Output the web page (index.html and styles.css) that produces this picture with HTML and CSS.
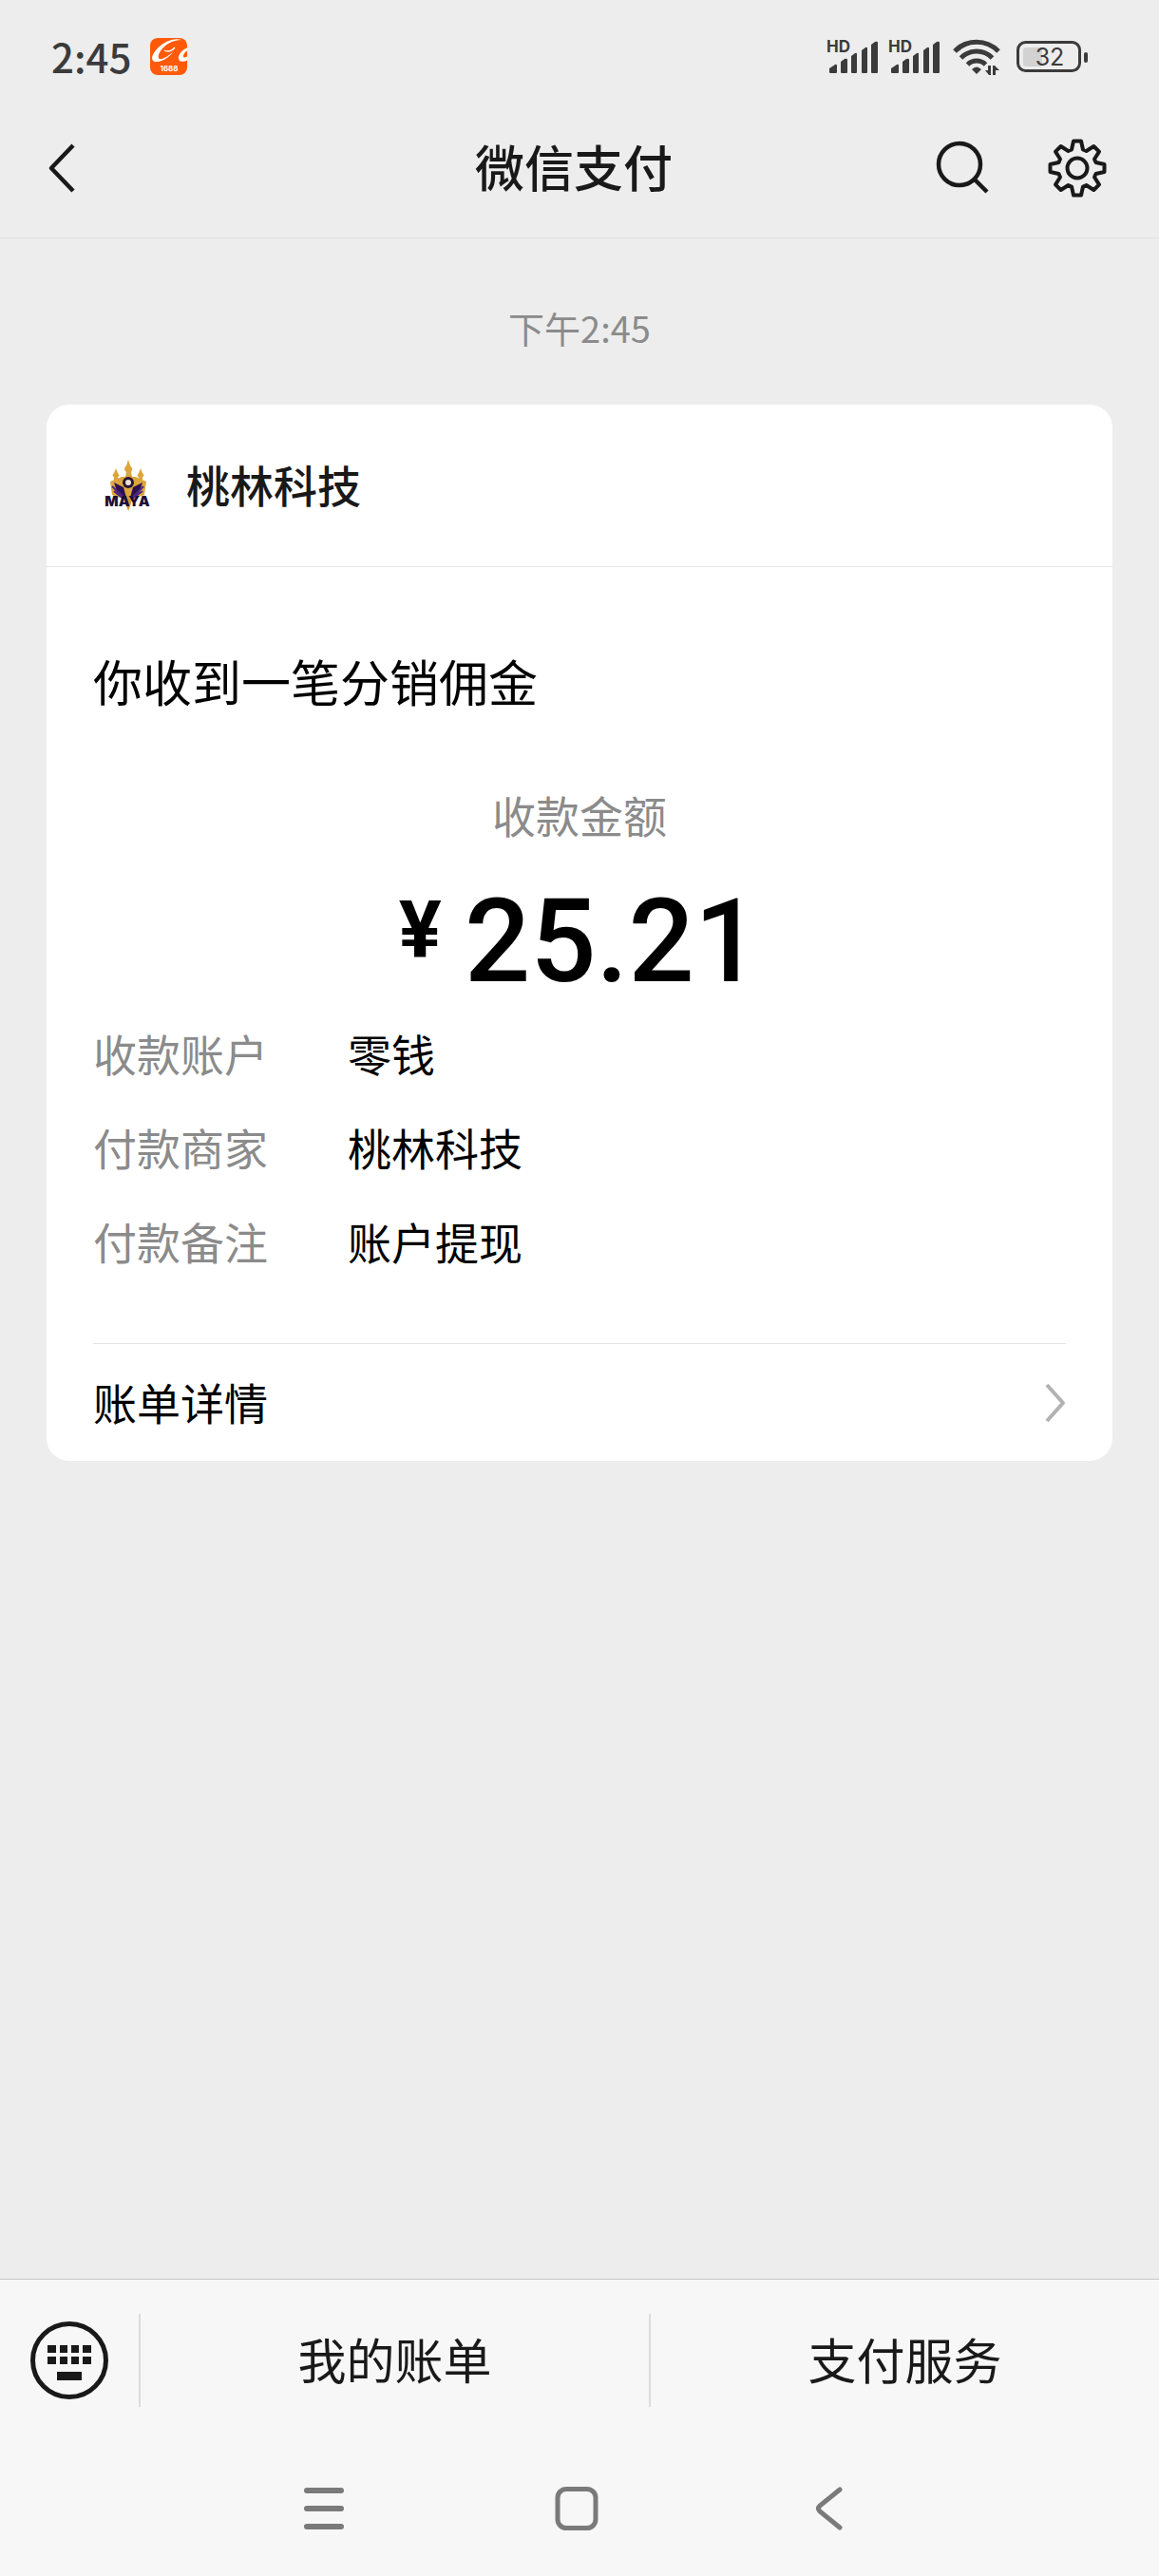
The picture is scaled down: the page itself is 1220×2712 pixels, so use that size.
FILE: index.html
```html
<!DOCTYPE html>
<html lang="zh-CN">
<head>
  <meta charset="UTF-8" />
  <meta name="viewport" content="width=device-width, initial-scale=1.0" />
  <title>微信支付</title>
  <link rel="stylesheet" href="styles.css">
</head>
<body>
  <div class="status">
    <span class="clock">2:45</span>
    <svg class="app-icon" width="40" height="40" viewBox="0 0 40 40">
      <defs><clipPath id="appClip"><rect width="39" height="39" rx="8" /></clipPath></defs>
      <g clip-path="url(#appClip)">
        <rect width="40" height="40" fill="#ff5a0a" />
        <path d="M33 2C24-1 12 5 6 13c-6 7-5 13 2 12 7-1 13-6 17-11-5 4-11 9-15 8-4-2 2-12 9-16 5-3 10-4 14-4z" fill="#fff" />
        <path d="M15 13c3 2 8 1 11-3" fill="none" stroke="#fff" stroke-width="1.5" />
        <path d="M40 10c-6 2-11 8-10 12 1 4 6 3 10 1v-4c-3 2-5 2-5 0 0-3 3-5 5-6z" fill="#fff" />
        <text x="20" y="35" class="app-text">1688</text>
      </g>
    </svg>
    <div class="status-right">
      <svg width="55" height="40" viewBox="0 0 55 40">
        <text x="0" y="15" class="hd-text">HD</text>
        <path d="M3 36v-4l6-4q2-1 2 1v7q0 1-1 1H4q-1 0-1-1zM15 36V25l4-3q3-1 3 1v13q0 1-1 1h-5q-1 0-1-1zM26 36V19l4-3q2-1 2 1v19q0 1-1 1h-4q-1 0-1-1zM37 36V13l4-3q2-1 2 1v25q0 1-1 1h-4q-1 0-1-1zM47 36V7l4-3q3-1 3 1v31q0 1-1 1h-5q-1 0-1-1z" fill="#3b3b3b" />
      </svg>
      <svg width="55" height="40" viewBox="0 0 55 40">
        <text x="0" y="15" class="hd-text">HD</text>
        <path d="M3 36v-4l6-4q2-1 2 1v7q0 1-1 1H4q-1 0-1-1zM15 36V25l4-3q3-1 3 1v13q0 1-1 1h-5q-1 0-1-1zM26 36V19l4-3q2-1 2 1v19q0 1-1 1h-4q-1 0-1-1zM37 36V13l4-3q2-1 2 1v25q0 1-1 1h-4q-1 0-1-1zM47 36V7l4-3q3-1 3 1v31q0 1-1 1h-5q-1 0-1-1z" fill="#3b3b3b" />
      </svg>
      <svg class="wifi" width="50" height="40" viewBox="0 0 50 40">
        <g fill="none" stroke="#3b3b3b" stroke-width="5">
          <path d="M2 14a32 32 0 0 1 46 0" />
          <path d="M8.500 21a23 23 0 0 1 33 0" />
          <path d="M15.500 28a13.500 13.500 0 0 1 19 0" />
        </g>
        <path d="M25 38l-5-5q5-5 10 0z" fill="#3b3b3b" />
        <path d="M40 29v10h-2l-4-5h3v-5zM42 39V29h2l5 5h-4v5z" fill="#3b3b3b" />
      </svg>
      <svg class="battery" width="76" height="34" viewBox="0 0 76 34">
        <rect x="7" y="7" width="20" height="20" rx="3" fill="#d2d2d2" />
        <rect x="1.500" y="1.500" width="65" height="30" rx="8" fill="none" stroke="#3b3b3b" stroke-width="3" />
        <rect x="71" y="12" width="4" height="11" rx="2" fill="#3b3b3b" />
        <text x="35" y="26" class="battery-text">32</text>
      </svg>
    </div>
  </div>

  <header class="header">
    <button class="icon-btn back" aria-label="返回">
      <svg width="30" height="54" viewBox="0 0 30 54"><path d="M27 3L4 27l23 24" fill="none" stroke="#191919" stroke-width="4.500" stroke-linejoin="round" /></svg>
    </button>
    <h1>微信支付</h1>
    <div class="header-right">
      <button class="icon-btn" aria-label="搜索">
        <svg width="58" height="58" viewBox="0 0 58 58" fill="none" stroke="#191919" stroke-width="4.500"><circle cx="25" cy="25" r="22" /><path d="M41 41l13 13" /></svg>
      </button>
      <button class="icon-btn" aria-label="设置">
        <svg width="62" height="62" viewBox="-31 -31 62 62" fill="none" stroke="#191919" stroke-width="4" stroke-linejoin="round">
          <path d="M-4-28.500H4L6-19.500 9.500-18 17.300-23 23-17.300 18-9.500 19.500-6 28.500-4V4L19.500 6 18 9.500 23 17.300 17.300 23 9.500 18 6 19.500 4 28.500H-4L-6 19.500-9.500 18-17.300 23-23 17.300-18 9.500-19.500 6-28.500 4V-4L-19.500-6-18-9.500-23-17.300-17.300-23-9.500-18-6-19.500z" />
          <circle r="10.500" />
        </svg>
      </button>
    </div>
  </header>

  <main>
    <p class="time">下午2:45</p>

    <section class="card">
      <div class="card-head">
        <svg width="72" height="72" viewBox="0 0 72 72">
          <g fill="#dca63c">
            <path d="M37 9l2 6q4 4 1 7l2 9h-9l2-9q-4-3 0-7zM24 18l2 5q3 3 0 4v5h-4v-5q-3-1 0-4zM50 18l2 5q3 3 0 4v5h-4v-5q-3-1 0-4z" />
            <path d="M18 32l12-5h15l11 5-2 14-11 4-6 8-6-8-11-4z" />
          </g>
          <path d="M22 33l10 5 3 11-9-4zM52 33l-10 5-3 11 9-4z" fill="#2b1150" />
          <path d="M20 37l13 12M53 37L41 49M22 42l10 8M52 42l-11 8" stroke="#4d2584" stroke-width="2" />
          <circle cx="37" cy="33" r="6" fill="#28172f" />
          <circle cx="37" cy="33" r="3" fill="#e9e2d4" />
          <path d="M37 47l3 8-3 8-3-8z" fill="#d39a32" />
          <text x="36" y="58" class="logo-text">MAYA</text>
        </svg>
        <h2>桃林科技</h2>
      </div>
      <div class="card-body">
        <h3>你收到一笔分销佣金</h3>
        <p class="amount-label">收款金额</p>
        <p class="amount"><span class="yen">¥</span>25.21</p>
        <dl class="details">
          <dt>收款账户</dt><dd>零钱</dd>
          <dt>付款商家</dt><dd>桃林科技</dd>
          <dt>付款备注</dt><dd>账户提现</dd>
        </dl>
        <a href="#" class="bill-link">
          <span>账单详情</span>
          <svg width="22" height="42" viewBox="0 0 22 42"><path d="M2 2l17 19L2 40" fill="none" stroke="#b2b2b2" stroke-width="4" stroke-linejoin="round" /></svg>
        </a>
      </div>
    </section>
  </main>

  <footer>
    <div class="menu-bar">
      <button class="keyboard" aria-label="键盘">
        <svg width="82" height="82" viewBox="0 0 82 82">
          <circle cx="41" cy="41" r="38.500" fill="none" stroke="#191919" stroke-width="5" />
          <path d="M18 25h9v8h-9zM31 25h8v8h-8zM43 25h8v8h-8zM55 25h9v8h-9zM18 37h9v8h-9zM31 37h8v8h-8zM43 37h8v8h-8zM55 37h9v8h-9zM28 53h26v9H28z" fill="#191919" />
        </svg>
      </button>
      <button class="menu-item">我的账单</button>
      <button class="menu-item">支付服务</button>
    </div>
    <nav class="system-nav">
      <button class="icon-btn" aria-label="最近任务">
        <svg width="46" height="46" viewBox="0 0 46 46"><path d="M5 4h36M5 23h36M5 42h36" stroke="#7a7a7a" stroke-width="6" stroke-linecap="round" /></svg>
      </button>
      <button class="icon-btn" aria-label="主屏幕">
        <svg width="46" height="46" viewBox="0 0 46 46"><rect x="3" y="2.500" width="40" height="41" rx="9" fill="none" stroke="#7a7a7a" stroke-width="5" /></svg>
      </button>
      <button class="icon-btn" aria-label="后退">
        <svg width="46" height="46" viewBox="0 0 46 46"><path d="M34 3L13 20q-3 3 0 6l21 17" fill="none" stroke="#7a7a7a" stroke-width="5" stroke-linecap="round" /></svg>
      </button>
    </nav>
  </footer>
</body>
</html>
```
FILE: styles.css
```css
* {
  box-sizing: border-box;
}
body {
  display: flex;
  flex-direction: column;
  min-height: 100vh;
  margin: 0;
  background-color: #ededed;
  color: #191919;
  font-family: 'Noto Sans CJK SC', sans-serif;
}
h1, h2, h3, p, dl, dd {
  margin: 0;
}
svg {
  display: block;
}
button {
  padding: 0;
  border: none;
  background: none;
  color: inherit;
  font-family: inherit;
  cursor: pointer;
}

.status {
  display: flex;
  align-items: center;
  height: 120px;
  padding: 0 74px 0 54px;
}
.clock {
  padding-bottom: 4px;
  color: #3b3b3b;
  font-size: 42px;
  font-weight: 500;
}
.app-icon {
  margin-left: 20px;
}
.status-right {
  display: flex;
  align-items: center;
  gap: 10px;
  margin-left: auto;
}
.wifi {
  margin-left: 3px;
}
.battery {
  margin-left: 7px;
}
.hd-text {
  fill: #3b3b3b;
  font: bold 17px Inter, sans-serif;
}
.app-text {
  fill: #fff;
  font: bold 8px Inter, sans-serif;
  text-anchor: middle;
}
.battery-text {
  fill: #3b3b3b;
  font: 25px Inter, sans-serif;
  text-anchor: middle;
}
.logo-text {
  fill: #1d0f3a;
  font: 900 15px Inter, sans-serif;
  text-anchor: middle;
}

.header {
  display: grid;
  grid-template-columns: 1fr auto 1fr;
  align-items: center;
  height: 131px;
  padding: 0 55px 16px 43px;
  border-bottom: 1px solid #e1e1e1;
}
.header h1 {
  padding-bottom: 4px;
  font-size: 52px;
  font-weight: 500;
  line-height: 60px;
}
.back {
  justify-self: start;
  padding-left: 7px;
}
.header-right {
  display: flex;
  justify-content: flex-end;
  gap: 60px;
}

main {
  flex: 1;
  padding: 0 49px;
}
.time {
  padding: 62px 0 50px;
  color: #8b8b8b;
  font-size: 38px;
  line-height: 63px;
  text-align: center;
}
.card {
  border-radius: 24px;
  background-color: #fff;
}
.card-head {
  display: flex;
  align-items: center;
  gap: 26px;
  height: 171px;
  padding: 0 49px;
  border-bottom: 1px solid #e5e5e5;
}
.card-head h2 {
  padding-bottom: 4px;
  font-size: 46px;
  font-weight: 500;
}
.card-body {
  padding: 0 49px;
}
.card-body h3 {
  padding-top: 84px;
  color: #000;
  font-size: 52px;
  font-weight: 400;
  line-height: 72px;
}
.amount-label {
  padding-top: 72px;
  color: #8b8b8b;
  font-size: 46px;
  line-height: 64px;
  text-align: center;
}
.amount {
  display: flex;
  justify-content: center;
  gap: 24px;
  padding-top: 38px;
  color: #000;
  font-family: Roboto, sans-serif;
  font-size: 122px;
  font-weight: 500;
  line-height: 130px;
}
.yen {
  font-size: 84px;
  font-weight: 700;
  line-height: 106px;
}
.details {
  display: grid;
  grid-template-columns: 268px 1fr;
  padding-top: 2px;
  font-size: 46px;
  line-height: 99px;
}
.details dt {
  color: #8b8b8b;
}
.details dd {
  color: #000;
}
.bill-link {
  display: flex;
  align-items: center;
  justify-content: space-between;
  height: 124px;
  margin-top: 58px;
  border-top: 1px solid #e5e5e5;
  color: #000;
  font-size: 46px;
  text-decoration: none;
}
.bill-link span {
  padding-bottom: 4px;
}

footer {
  border-top: 1px solid #c8c8c8;
  background-color: #f7f7f7;
}
.menu-bar {
  display: flex;
  align-items: center;
  height: 170px;
}
.keyboard {
  padding: 0 32px;
}
.menu-item {
  flex: 1;
  height: 98px;
  padding-bottom: 4px;
  border-left: 2px solid #dcdcdc;
  font-size: 51px;
}
.system-nav {
  display: flex;
  justify-content: center;
  gap: 220px;
  padding: 48px 6px 48px 0;
}
```
